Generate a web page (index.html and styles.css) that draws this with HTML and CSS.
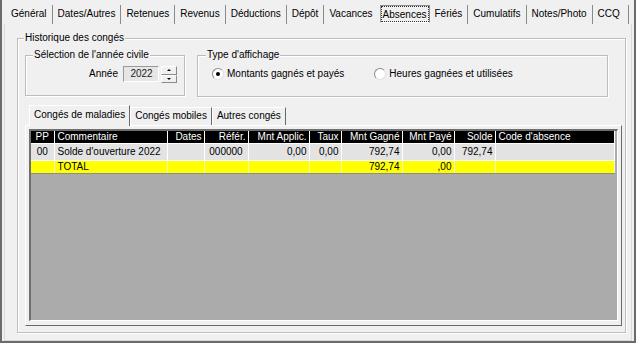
FILE: index.html
```html
<!DOCTYPE html>
<html lang="fr">
<head>
  <meta charset="UTF-8">
  <title>Absences</title>
  <link rel="stylesheet" href="styles.css">
</head>
<body>
  <div class="window">
    <div class="tabbar">
      <span class="tab">Général</span>
      <span class="tab">Dates/Autres</span>
      <span class="tab">Retenues</span>
      <span class="tab">Revenus</span>
      <span class="tab">Déductions</span>
      <span class="tab">Dépôt</span>
      <span class="tab no-sep">Vacances</span>
      <span class="tab active"><span class="focus">Absences</span></span>
      <span class="tab">Fériés</span>
      <span class="tab">Cumulatifs</span>
      <span class="tab">Notes/Photo</span>
      <span class="tab last">CCQ</span>
    </div>

    <div class="page">
      <fieldset class="group history">
        <legend>Historique des congés</legend>

        <div class="options">
          <fieldset class="group year">
            <legend>Sélection de l'année civile</legend>
            <span class="year-label">Année</span>
            <span class="spin-value">2022</span>
            <span class="spin-buttons">
              <span class="spin-btn"><span class="arrow up"></span></span>
              <span class="spin-btn"><span class="arrow down"></span></span>
            </span>
          </fieldset>

          <fieldset class="group display">
            <legend>Type d'affichage</legend>
            <label class="radio"><span class="radio-dot checked"></span>Montants gagnés et payés</label>
            <label class="radio second"><span class="radio-dot"></span>Heures gagnées et utilisées</label>
          </fieldset>
        </div>

        <div class="subtabs">
          <span class="subtab active">Congés de maladies</span>
          <span class="subtab">Congés mobiles</span>
          <span class="subtab">Autres congés</span>
        </div>

        <div class="subpanel">
          <div class="grid">
            <table class="leave-table">
              <colgroup>
                <col class="c-pp">
                <col class="c-comment">
                <col class="c-dates">
                <col class="c-ref">
                <col class="c-applic">
                <col class="c-taux">
                <col class="c-gagne">
                <col class="c-paye">
                <col class="c-solde">
                <col class="c-code">
              </colgroup>
              <thead>
                <tr>
                  <th class="center">PP</th>
                  <th>Commentaire</th>
                  <th class="num">Dates</th>
                  <th class="num">Référ.</th>
                  <th class="num">Mnt Applic.</th>
                  <th class="num">Taux</th>
                  <th class="num">Mnt Gagné</th>
                  <th class="num">Mnt Payé</th>
                  <th class="num">Solde</th>
                  <th>Code d'absence</th>
                </tr>
              </thead>
              <tbody>
                <tr class="row">
                  <td class="center">00</td>
                  <td>Solde d'ouverture 2022</td>
                  <td></td>
                  <td class="center">000000</td>
                  <td class="num">0,00</td>
                  <td class="num">0,00</td>
                  <td class="num">792,74</td>
                  <td class="num">0,00</td>
                  <td class="num">792,74</td>
                  <td></td>
                </tr>
                <tr class="total">
                  <td></td>
                  <td>TOTAL</td>
                  <td></td>
                  <td></td>
                  <td></td>
                  <td></td>
                  <td class="num">792,74</td>
                  <td class="num">,00</td>
                  <td></td>
                  <td></td>
                </tr>
              </tbody>
            </table>
          </div>
        </div>
      </fieldset>
    </div>
  </div>
</body>
</html>
```

FILE: styles.css
```css
/* Base */
body {
  margin: 0;
  font-family: "Liberation Sans", Arial, sans-serif;
  font-size: 10px;
  color: #000;
  background: #f0f0f0;
}

.window {
  width: 636px;
  height: 343px;
  box-sizing: border-box;
  background: #f0f0f0;
  border: 2px solid #6b6b6b;
  border-top: 0;
  display: flex;
  flex-direction: column;
}

/* Top tab bar (flat buttons) */
.tabbar {
  display: flex;
  height: 24px;
  box-sizing: border-box;
  padding: 5px 0 0 4px;
}

.tab {
  height: 19px;
  line-height: 18px;
  padding: 0 5px;
  border-right: 1px solid #8a8a8a;
  box-sizing: border-box;
  white-space: nowrap;
}

.tab.no-sep {
  border-right: 0;
  padding-right: 7px;
}

.tab.last {
  padding-right: 8px;
}

.tab.active {
  height: 18px;
  padding: 1px 1px 0 1px;
  line-height: 15px;
  border: 1px solid;
  border-color: #8a8a8a #8a8a8a #ffffff #a0a0a0;
  margin-right: 0;
}

.focus {
  display: block;
  height: 14px;
  padding: 0 1px;
  outline: 1px dotted #333;
  outline-offset: 0;
}

/* Page */
.page {
  flex: 1;
  margin: 0 2px;
  border: 1px solid #d9d9d9;
  border-top: 0;
  padding: 8px 5px 0 12px;
}

/* Group boxes */
.group {
  margin: 0;
  border: 1px solid #bdbdbd;
  box-shadow: inset 1px 1px #fff, 1px 1px #fff;
  min-width: 0;
  box-sizing: border-box;
}

.group legend {
  padding: 0 1px;
  margin-left: -1px;
  line-height: 12px;
  background: #f0f0f0;
}

.history {
  width: 609px;
  height: 301px;
  padding: 5px 7px 0 7px;
}

.options {
  display: flex;
  gap: 12px;
}

.year {
  width: 160px;
  height: 47px;
  padding: 5px 7px 0 7px;
  display: flex;
  justify-content: flex-end;
  align-items: flex-start;
}

.year legend {
  margin-left: 0;
}

.year-label {
  line-height: 16px;
  margin-right: 5px;
}

.spin-value {
  width: 36px;
  height: 16px;
  box-sizing: border-box;
  line-height: 14px;
  text-align: center;
  background: #e6e6e6;
  color: #222;
  border: 1px solid;
  border-color: #9a9a9a #fff #fff #9a9a9a;
  padding-left: 1px;
}

.spin-buttons {
  display: flex;
  flex-direction: column;
  margin-left: 2px;
  width: 16px;
  height: 17px;
}

.spin-btn {
  flex: 1;
  display: flex;
  align-items: center;
  justify-content: center;
  border: 1px solid;
  border-color: #fff #8a8a8a #8a8a8a #fff;
  background: #f0f0f0;
}

.arrow {
  width: 0;
  height: 0;
  border-left: 2px solid transparent;
  border-right: 2px solid transparent;
}

.arrow.up {
  border-bottom: 2px solid #000;
}

.arrow.down {
  border-top: 2px solid #000;
}

.display {
  width: 411px;
  height: 48px;
  padding: 6px 0 0 14px;
  display: flex;
  align-items: flex-start;
}

.display legend {
  margin-left: -6px;
}

.radio {
  display: flex;
  align-items: center;
  line-height: 14px;
  white-space: nowrap;
}

.radio.second {
  margin-left: 30px;
}

.radio-dot {
  width: 12px;
  height: 12px;
  box-sizing: border-box;
  border-radius: 50%;
  border: 1px solid;
  border-color: #8a8a8a #e0e0e0 #e0e0e0 #8a8a8a;
  background: #fff;
  margin-right: 3px;
  display: flex;
  align-items: center;
  justify-content: center;
}

.radio-dot.checked::after {
  content: "";
  width: 4px;
  height: 4px;
  border-radius: 50%;
  background: #000;
}

/* Inner tabs */
.subtabs {
  display: flex;
  align-items: flex-end;
  height: 20px;
  margin-top: 8px;
  padding-left: 4px;
}

.subtab {
  height: 18px;
  line-height: 16px;
  padding: 0 4px;
  box-sizing: border-box;
  border: 1px solid;
  border-color: #fff #696969 transparent #fff;
  border-bottom: 0;
  white-space: nowrap;
}

.subtab.active {
  height: 21px;
  line-height: 18px;
  margin-bottom: -1px;
  background: #f0f0f0;
  position: relative;
  padding: 0 4px;
}

.subpanel {
  width: 597px;
  height: 201px;
  box-sizing: border-box;
  border: 1px solid;
  border-color: #fff #696969 #696969 #fff;
  padding: 3px 3px 0 3px;
}

.grid {
  height: 192px;
  box-sizing: border-box;
  background: #ababab;
  border-style: solid;
  border-width: 2px 1px 1px 2px;
  border-color: #6f6f6f #fff #fff #6f6f6f;
}

/* Table */
.leave-table {
  border-collapse: collapse;
  table-layout: fixed;
  width: 583px;
}

.c-pp { width: 23px; }
.c-comment { width: 113px; }
.c-dates { width: 37px; }
.c-ref { width: 44px; }
.c-applic { width: 61px; }
.c-taux { width: 32px; }
.c-gagne { width: 61px; }
.c-paye { width: 52px; }
.c-solde { width: 41px; }
.c-code { width: 119px; }

.leave-table th,
.leave-table td {
  padding: 0 2px 0 3px;
  border-right: 1px solid #fff;
  border-bottom: 1px solid #fff;
  white-space: nowrap;
  overflow: hidden;
  text-align: left;
  font-weight: normal;
}

.leave-table th {
  height: 12px;
  line-height: 12px;
  background: #000;
  color: #fff;
}

.leave-table .num {
  text-align: right;
}

.leave-table .center {
  text-align: center;
  padding: 0;
}

.row td {
  height: 16px;
  line-height: 16px;
  background: #e3e3e3;
}

.total td {
  height: 12px;
  line-height: 12px;
  background: #ffff00;
  border-right-color: #f4f4c8;
  border-bottom: 1px solid #8c8c8c;
}
```
